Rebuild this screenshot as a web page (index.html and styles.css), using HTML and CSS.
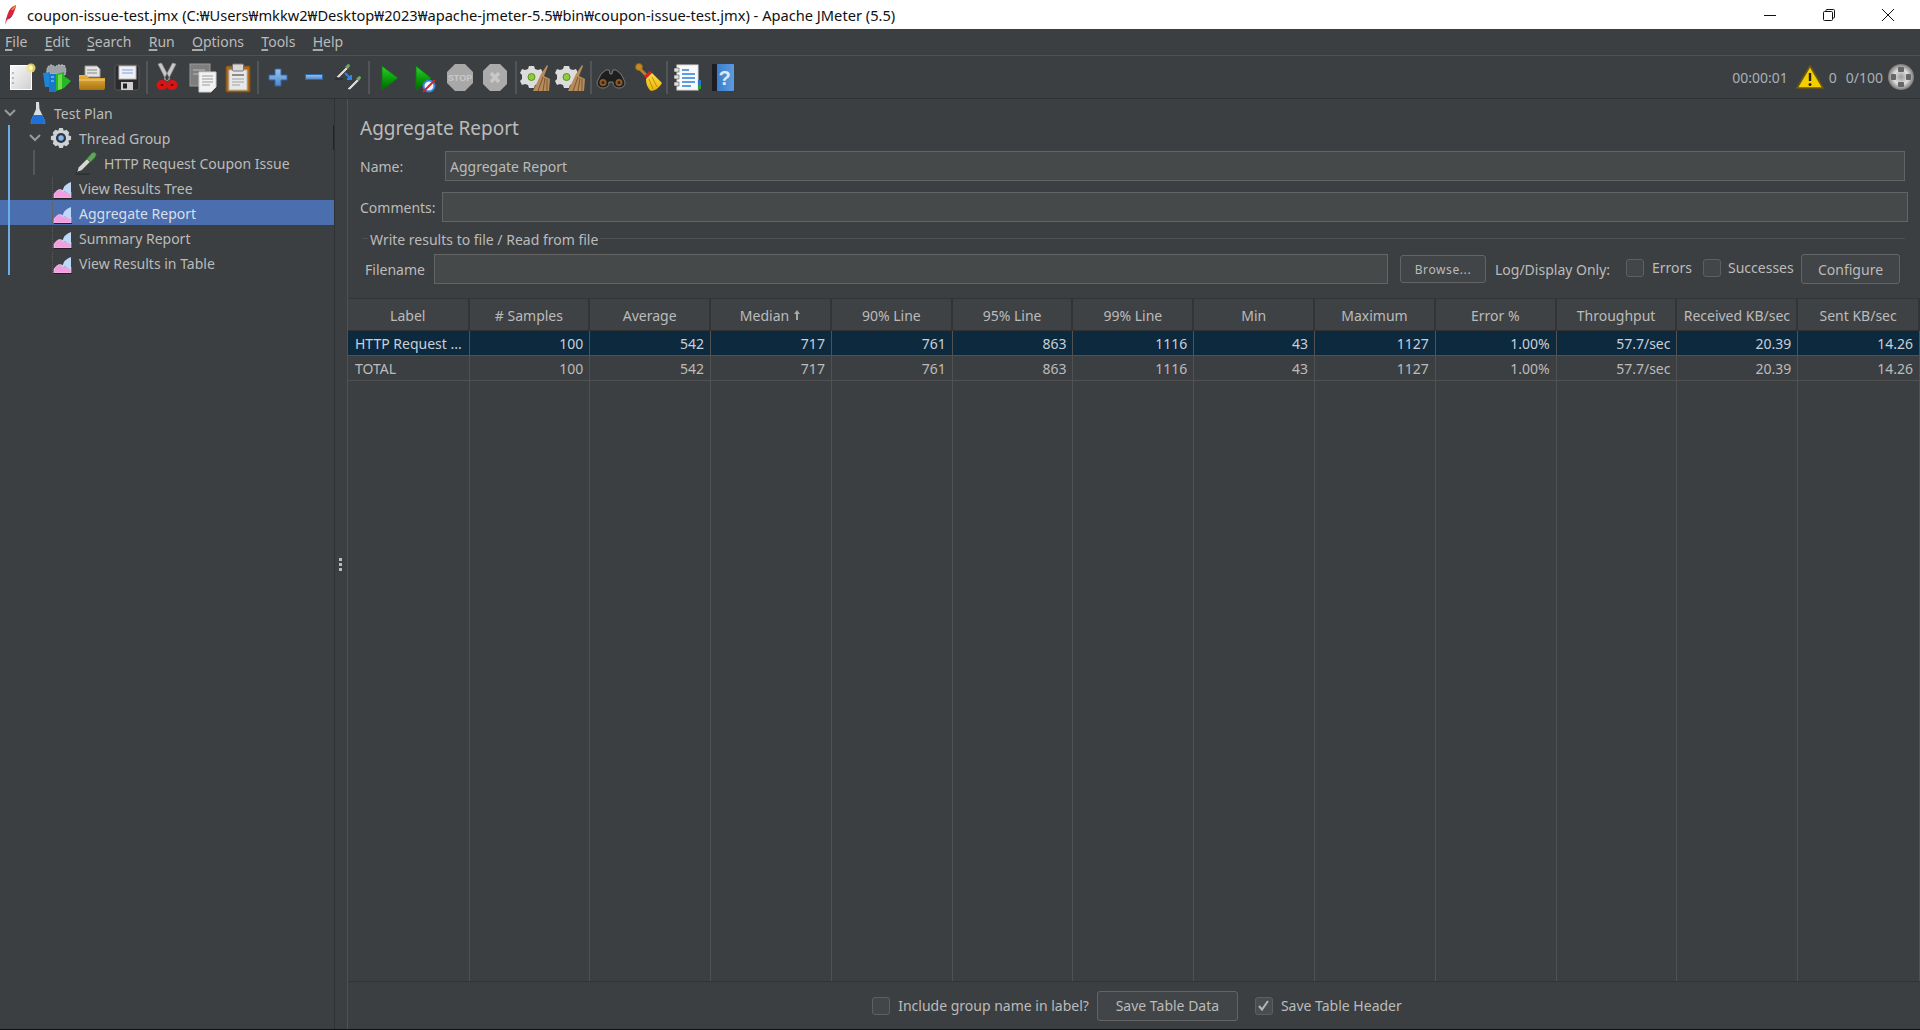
FILE: index.html
```html
<!DOCTYPE html>
<html lang="en">
<head>
<meta charset="utf-8">
<title>coupon-issue-test.jmx - Apache JMeter (5.5)</title>
<link rel="stylesheet" href="styles.css">
</head>
<body>
<svg class="defs" width="0" height="0" aria-hidden="true">
  <defs>
    <linearGradient id="gDoc" x1="0" y1="0" x2="1" y2="1"><stop offset="0" stop-color="#fafafa"/><stop offset="1" stop-color="#cfcfcf"/></linearGradient>
    <linearGradient id="gGreen" x1="0" y1="0" x2="0" y2="1"><stop offset="0" stop-color="#2ed22e"/><stop offset=".55" stop-color="#0a9a0a"/><stop offset="1" stop-color="#056005"/></linearGradient>
    <linearGradient id="gFolder" x1="0" y1="0" x2="0" y2="1"><stop offset="0" stop-color="#eeb440"/><stop offset="1" stop-color="#a87410"/></linearGradient>
    <linearGradient id="gBlue" x1="0" y1="0" x2="0" y2="1"><stop offset="0" stop-color="#9cc4ee"/><stop offset="1" stop-color="#4c86c8"/></linearGradient>
    <linearGradient id="gBook" x1="0" y1="0" x2="1" y2="0"><stop offset="0" stop-color="#2f74c4"/><stop offset="1" stop-color="#5c9be0"/></linearGradient>
    <linearGradient id="gYellow" x1="0" y1="0" x2="0" y2="1"><stop offset="0" stop-color="#ffe14a"/><stop offset="1" stop-color="#e8b400"/></linearGradient>
    <radialGradient id="gGlobe"><stop offset="0" stop-color="#9a9a9a"/><stop offset=".55" stop-color="#e0e0e0"/><stop offset="1" stop-color="#7a7a7a"/></radialGradient>
    <symbol id="pipette" viewBox="3 2 26 28">
      <path d="M5 27 L7 21 L18 10 L22 14 L11 25 Z" fill="#d6d6d6" stroke="#222" stroke-width="1"/>
      <path d="M17 11 L23 4 Q27 2 28 6 Q28 9 21 15 Z" fill="#5fa65a" stroke="#2f5f2c" stroke-width=".8"/>
      <path d="M4 29 H20" stroke="#222" stroke-width="1.400" opacity=".7"/>
    </symbol>
    <symbol id="graph" viewBox="0 0 22 22">
      <path d="M2 21 V17 Q6 11 10 13 Q13 17 19 15 V21 Z" fill="#f0a0e0" stroke="#f8d0f0" stroke-width=".6"/>
      <path d="M10 15 Q12 7 19 5 V18 Q13 13 10 15 Z" fill="#c0d8f8"/>
      <path d="M2 21.500 H20" stroke="#222" stroke-width="1"/>
      <path d="M.500 0 V22" stroke="#5c5c5c" stroke-width="1" stroke-dasharray="1 1"/>
    </symbol>
    <symbol id="clearGear" viewBox="0 0 32 32">
      <path d="M13 5 h5 l1 3 3 1 3-1 2 4-2 2 v4 l2 2-2 4-3-1-3 1-1 3 h-5 l-1-3-3-1-3 1-2-4 2-2 v-4 l-2-2 2-4 3 1 3-1 Z" fill="#dcdcdc" transform="translate(-4 0)"/>
      <circle cx="11.500" cy="16" r="3.500" fill="#8ecb3e" stroke="#5c8f1e"/>
      <path d="M13 30 L21 13 L27 4 L28 5 L24 15 L30 18 L29 30 Z" fill="#b78c5c"/>
      <path d="M18 30 L23 16 M23 30 L25 17 M27 30 L27 18" stroke="#7a5730" stroke-width="1"/>
    </symbol>
  </defs>
</svg>

<header class="titlebar">
  <svg class="feather" width="14" height="20" viewBox="0 0 14 20"><path d="M12 0 Q6 2 4 8 L2 14 L1 20 L3 15 Q9 12 10 7 Q12 3 12 0 Z" fill="#d8243c"/><path d="M12 0 Q9 2 7 5 L9 5 Q11 3 12 0 Z" fill="#f29a2e"/><path d="M4 12 L8 11 L5 14 Z" fill="#8a2a92"/></svg>
  <span class="title-text">coupon-issue-test.jmx (C:₩Users₩mkkw2₩Desktop₩2023₩apache-jmeter-5.5₩bin₩coupon-issue-test.jmx) - Apache JMeter (5.5)</span>
  <div class="winctl">
    <svg width="14" height="14" viewBox="0 0 14 14"><path d="M1 7.500 H13" stroke="#111" stroke-width="1"/></svg>
    <svg width="14" height="14" viewBox="0 0 14 14"><rect x="1.500" y="3.500" width="9" height="9" rx="1" fill="none" stroke="#111"/><path d="M4 3.500 V2.500 Q4 1.500 5 1.500 H11.500 Q12.500 1.500 12.500 2.500 V9 Q12.500 10 11.500 10 H10.500" fill="none" stroke="#111"/></svg>
    <svg width="14" height="14" viewBox="0 0 14 14"><path d="M1 1 L13 13 M13 1 L1 13" stroke="#111" stroke-width="1"/></svg>
  </div>
</header>

<nav class="menubar">
  <span><u>F</u>ile</span><span><u>E</u>dit</span><span><u>S</u>earch</span><span><u>R</u>un</span><span><u>O</u>ptions</span><span><u>T</u>ools</span><span><u>H</u>elp</span>
</nav>

<div class="toolbar">
  <span class="ti"><svg width="32" height="32" viewBox="0 0 32 32"><rect x="5.500" y="4.500" width="21" height="24" fill="url(#gDoc)" stroke="#fff"/><path d="M7 12h2M7 17h2M7 22h2" stroke="#888"/><circle cx="26" cy="7" r="4.500" fill="#f3e27a" opacity=".85"/><circle cx="26" cy="7" r="2" fill="#fff6b8"/></svg></span>
  <span class="ti"><svg width="32" height="32" viewBox="0 0 32 32"><path d="M7 12 Q6 4 12 4 L15 6 L18 4 L24 4 Q27 8 25 14 Z" fill="#9ba3a8" stroke="#c8cdd0" stroke-dasharray="2 1"/><path d="M3 12 L10 11 L10 26 L5 26 Z" fill="#1f84d6"/><path d="M9 13 H16 V31 H9 Z" fill="#1777c8"/><path d="M11 16h3M11 20h3" stroke="#a8e0ff"/><path d="M16 13 L24 11 L24 15 L31 20 L24 27 L16 30 Z" fill="#26b824"/><path d="M18 14 L22 13 L22 28 L18 29 Z" fill="#6fdc4c"/></svg></span>
  <span class="ti"><svg width="32" height="32" viewBox="0 0 32 32"><path d="M9 16 V5 H21 L24 8 V16 Z" fill="#e4e4e4" stroke="#999"/><path d="M11 9h10M11 12h10" stroke="#888"/><path d="M3 14 H11 L13 17 H29 V27 Q29 29 27 29 H5 Q3 29 3 27 Z" fill="url(#gFolder)"/><path d="M3 19 H29" stroke="#f7d27a"/></svg></span>
  <span class="ti"><svg width="32" height="32" viewBox="0 0 32 32"><rect x="4" y="4" width="24" height="25" rx="2" fill="#2b2b2d" stroke="#555"/><rect x="8" y="5" width="17" height="13" fill="#eef0f6" stroke="#bbb"/><path d="M11 9h11M11 12h11" stroke="#7fa4d6"/><rect x="10" y="21" width="12" height="8" fill="#cfcfcf"/><rect x="12" y="22.500" width="4" height="5" fill="#222"/></svg></span>
  <i class="tsep"></i>
  <span class="ti"><svg width="32" height="32" viewBox="0 0 32 32"><path d="M7 3 L10.500 2 L19 18 L15.500 20 Z M25 3 L21.500 2 L13 18 L16.500 20 Z" fill="#c8c8c8" stroke="#8e8e8e" stroke-width=".6"/><ellipse cx="11" cy="24" rx="3.500" ry="3" fill="#5a1010" stroke="#d81414" stroke-width="4"/><ellipse cx="21" cy="24" rx="3.500" ry="3" fill="#5a1010" stroke="#d81414" stroke-width="4"/></svg></span>
  <span class="ti"><svg width="32" height="32" viewBox="0 0 32 32"><rect x="3" y="3" width="20" height="22" fill="#7e7e7e" stroke="#9a9a9a"/><path d="M6 9h12M6 13h9" stroke="#a8a8a8" stroke-width="1.500"/><path d="M12 11 H29 V26 L24 31 H12 Z" fill="#f2f2f2" stroke="#cfcfcf"/><path d="M15 15h11M15 18h11M15 21h11M15 24h8" stroke="#9a9a9a"/></svg></span>
  <span class="ti"><svg width="32" height="32" viewBox="0 0 32 32"><rect x="4" y="5" width="24" height="26" rx="1" fill="#a76a1e" stroke="#7c4a10"/><rect x="7" y="9" width="18" height="20" fill="#e8e8e8" stroke="#bbb"/><rect x="10.500" y="3" width="11" height="7" rx="1" fill="#d8d8d8" stroke="#777"/><path d="M10 14h12" stroke="#8c8c8c" stroke-width="2"/><path d="M10 18h12M10 21h12M10 24h8" stroke="#a0a0a0"/></svg></span>
  <i class="tsep"></i>
  <span class="ti"><svg width="32" height="32" viewBox="0 0 32 32"><path d="M13 8 H19 V14 H25 V19 H19 V25 H13 V19 H7 V14 H13 Z" fill="url(#gBlue)" stroke="#2e68ac"/></svg></span>
  <span class="ti"><svg width="32" height="32" viewBox="0 0 32 32"><rect x="7.500" y="13.500" width="17" height="5" fill="url(#gBlue)" stroke="#2e68ac"/></svg></span>
  <span class="ti"><svg width="32" height="32" viewBox="0 0 32 32"><path d="M3 16 L13 6 L15 8 L6 17 Z" fill="#d8d8d8" stroke="#222" stroke-width=".6"/><path d="M12 6 L15 3 Q17 3 17 5 L15 8 Z" fill="#6cab60"/><path d="M2 18 H10" stroke="#222"/><path d="M14 28 L24 18 L26 20 L17 29 Z" fill="#d8d8d8" stroke="#222" stroke-width=".6"/><path d="M23 18 L26 15 Q28 15 28 17 L26 20 Z" fill="#6cab60"/><path d="M12 12 L18 18 M18 14 V18 H14" stroke="#2a86e8" stroke-width="2" fill="none"/></svg></span>
  <i class="tsep"></i>
  <span class="ti"><svg width="32" height="32" viewBox="0 0 32 32"><path d="M9 5 L25 17 L9 29 Z" fill="url(#gGreen)" stroke="#0b7a0b" stroke-width=".8"/></svg></span>
  <span class="ti"><svg width="32" height="32" viewBox="0 0 32 32"><path d="M7 5 L22 17 L7 29 Z" fill="url(#gGreen)" stroke="#0b7a0b" stroke-width=".8"/><circle cx="20" cy="25" r="5.500" fill="#eef4fb" stroke="#3a82d8" stroke-width="2"/><path d="M14 31 L26 19" stroke="#d92020" stroke-width="1.800"/></svg></span>
  <span class="ti"><svg width="32" height="32" viewBox="0 0 32 32"><path d="M11 3 H21 L29 11 V22 L21 30 H11 L3 22 V11 Z" fill="#a8a8a8"/><text class="stop-word" x="16" y="20">STOP</text></svg></span>
  <span class="ti"><svg width="32" height="32" viewBox="0 0 32 32"><path d="M11 3 H21 L28 10 V23 L21 30 H11 L4 23 V10 Z" fill="#ababab"/><path d="M12 12 L20 21 M20 12 L12 21" stroke="#c8c8c8" stroke-width="3.400"/></svg></span>
  <i class="tsep"></i>
  <span class="ti"><svg width="32" height="32"><use href="#clearGear"/></svg></span>
  <span class="ti"><svg width="32" height="32"><use href="#clearGear"/></svg></span>
  <i class="tsep"></i>
  <span class="ti"><svg width="32" height="32" viewBox="0 0 32 32"><path d="M6 13 L11 9 H14 L15 13 H17 L18 9 H21 L26 13 L30 21 Q30 27 24 27 Q18 27 18 21 H14 Q14 27 8 27 Q2 27 2 21 Z" fill="#1e1e1e" stroke="#8c8c8c" stroke-width=".8"/><circle cx="8" cy="21.500" r="3.500" fill="#8c5a28"/><circle cx="24" cy="21.500" r="3.500" fill="#8c5a28"/><circle cx="8" cy="21.500" r="1.500" fill="#3a2412"/><circle cx="24" cy="21.500" r="1.500" fill="#3a2412"/></svg></span>
  <span class="ti"><svg width="32" height="32" viewBox="0 0 32 32"><circle cx="8" cy="6" r="3.500" fill="#c48a2a" stroke="#8d5f16"/><path d="M9 8 L16 15" stroke="#b98228" stroke-width="3"/><path d="M13 15 L19 10 L21 12 L16 18 Z" fill="#d42424"/><path d="M15 18 L21 12 Q27 18 31 22 Q27 29 20 30 Q15 26 15 18 Z" fill="url(#gYellow)"/><path d="M18 18 L22 28 M21 16 L26 26" stroke="#b88e08"/></svg></span>
  <i class="tsep"></i>
  <span class="ti"><svg width="32" height="32" viewBox="0 0 32 32"><rect x="6" y="4" width="21" height="25" fill="#fafafa" stroke="#ddd"/><rect x="27" y="19" width="3" height="5" fill="#2f74c4"/><rect x="27" y="24" width="3" height="4" fill="#2ba02b"/><rect x="3" y="7" width="5" height="4" fill="#e0e0e0" stroke="#333" stroke-width=".5"/><rect x="3" y="14" width="5" height="4" fill="#e0e0e0" stroke="#333" stroke-width=".5"/><rect x="3" y="21" width="5" height="4" fill="#e0e0e0" stroke="#333" stroke-width=".5"/><path d="M11 9h7M11 13h13M11 17h13M11 21h13M11 25h9" stroke="#2a7ee0" stroke-width="1.300"/></svg></span>
  <span class="ti"><svg width="32" height="32" viewBox="0 0 32 32"><rect x="6" y="3" width="22" height="27" rx="1" fill="url(#gBook)"/><rect x="6" y="3" width="5" height="27" fill="#1b1d22"/><text class="help-mark" x="18.500" y="24">?</text></svg></span>
  <div class="status">
    <span class="st-time">00:00:01</span>
    <svg width="28" height="26" viewBox="0 0 28 26"><path d="M14 2 L27 24 H1 Z" fill="#f4cf00" stroke="#6a5a10" stroke-width="1.600" stroke-linejoin="round"/><path d="M14 9 V17" stroke="#222" stroke-width="2.400"/><circle cx="14" cy="20.500" r="1.500" fill="#222"/></svg>
    <span class="st-zero">0</span>
    <span class="st-count">0/100</span>
    <svg width="28" height="28" viewBox="0 0 28 28"><circle cx="14" cy="14" r="13" fill="url(#gGlobe)"/><g fill="#666"><rect x="11" y="4" width="6" height="5" rx="1"/><rect x="11" y="19" width="6" height="5" rx="1"/><rect x="4" y="11" width="5" height="6" rx="1"/><rect x="19" y="11" width="5" height="6" rx="1"/></g></svg>
  </div>
</div>

<main class="main">
  <aside class="tree">
    <div class="tree-row lv0">
      <svg class="chev" width="14" height="10" viewBox="0 0 14 10"><path d="M2 2 L7 7 L12 2" fill="none" stroke="#9a9a9a" stroke-width="2"/></svg>
      <svg class="ic" width="16" height="24" viewBox="0 0 16 24"><path d="M6 1 H9 L9.500 8 L15 20 Q16 23 13 23 H3 Q0 23 1 20 L6 8 Z" fill="#d8dde0"/><path d="M3 14 H12.500 L15 20 Q16 23 13 23 H3 Q0 23 1 20 Z" fill="#1f6fd8"/></svg>
      <span>Test Plan</span>
    </div>
    <div class="tree-row lv1">
      <svg class="chev" width="14" height="10" viewBox="0 0 14 10"><path d="M2 2 L7 7 L12 2" fill="none" stroke="#9a9a9a" stroke-width="2"/></svg>
      <svg class="ic" width="22" height="22" viewBox="0 0 24 24"><path d="M10 1 h4 l1 3 3-1 3 3-1 3 3 1 v4 l-3 1 1 3-3 3-3-1-1 3 h-4 l-1-3-3 1-3-3 1-3-3-1 v-4 l3-1-1-3 3-3 3 1 Z" fill="#cfd2d4"/><circle cx="12" cy="12" r="5.500" fill="#23364e"/><circle cx="12" cy="12" r="3" fill="#8db4dc"/></svg>
      <span>Thread Group</span>
    </div>
    <div class="tree-row lv2">
      <svg class="ic" width="24" height="24"><use href="#pipette"/></svg>
      <span>HTTP Request Coupon Issue</span>
    </div>
    <div class="tree-row lv3"><svg class="ic" width="22" height="22"><use href="#graph"/></svg><span>View Results Tree</span></div>
    <div class="tree-row lv3 sel"><svg class="ic" width="22" height="22"><use href="#graph"/></svg><span>Aggregate Report</span></div>
    <div class="tree-row lv3"><svg class="ic" width="22" height="22"><use href="#graph"/></svg><span>Summary Report</span></div>
    <div class="tree-row lv3"><svg class="ic" width="22" height="22"><use href="#graph"/></svg><span>View Results in Table</span></div>
    <i class="guide g-blue"></i>
    <i class="guide g-grey"></i>
    <i class="guide g-edge"></i>
  </aside>
  <div class="splitter"><i></i><i></i><i></i></div>
  <section class="panel">
    <h1 class="panel-title">Aggregate Report</h1>
    <div class="frow name-row"><label>Name:</label><div class="input">Aggregate Report</div></div>
    <div class="frow comm-row"><label>Comments:</label><div class="input"></div></div>
    <div class="legend"><i class="l1"></i><span>Write results to file / Read from file</span><i class="l2"></i></div>
    <div class="frow file-row">
      <label>Filename</label><div class="input"></div>
      <button class="btn browse">Browse...</button>
      <span class="logonly">Log/Display Only:</span>
      <span class="cb"></span><span class="cbl err">Errors</span>
      <span class="cb"></span><span class="cbl suc">Successes</span>
      <button class="btn conf">Configure</button>
    </div>
    <div class="table">
      <div class="thead">
        <div>Label</div><div># Samples</div><div>Average</div><div>Median <svg width="8" height="12" viewBox="0 0 8 12"><path d="M4 1 L7 5 H5 V11 H3 V5 H1 Z" fill="#a8a8a8"/></svg></div><div>90% Line</div><div>95% Line</div><div>99% Line</div><div>Min</div><div>Maximum</div><div>Error %</div><div>Throughput</div><div>Received KB/sec</div><div>Sent KB/sec</div>
      </div>
      <div class="trow picked">
        <div>HTTP Request ...</div><div>100</div><div>542</div><div>717</div><div>761</div><div>863</div><div>1116</div><div>43</div><div>1127</div><div>1.00%</div><div>57.7/sec</div><div>20.39</div><div>14.26</div>
      </div>
      <div class="trow">
        <div>TOTAL</div><div>100</div><div>542</div><div>717</div><div>761</div><div>863</div><div>1116</div><div>43</div><div>1127</div><div>1.00%</div><div>57.7/sec</div><div>20.39</div><div>14.26</div>
      </div>
      <div class="tfill">
        <div></div><div></div><div></div><div></div><div></div><div></div><div></div><div></div><div></div><div></div><div></div><div></div><div></div>
      </div>
    </div>
    <footer class="foot">
      <span class="cb"></span><span class="cbl inc">Include group name in label?</span>
      <button class="btn save">Save Table Data</button>
      <span class="cb on"><svg width="13" height="13" viewBox="0 0 13 13"><path d="M2 7 L5 10.500 L11 2" fill="none" stroke="#b4b4b4" stroke-width="2"/></svg></span><span class="cbl hdr">Save Table Header</span>
    </footer>
  </section>
</main>
</body>
</html>
```
FILE: styles.css
```css
* { box-sizing: border-box; }
html, body { margin: 0; padding: 0; }
body {
  width: 1920px;
  height: 1030px;
  overflow: hidden;
  display: flex;
  flex-direction: column;
  background: #3c3f41;
  color: #bbbbbb;
  font-family: "Noto Sans", "Noto Sans CJK KR", sans-serif;
  font-size: 14px;
  border-bottom: 1px solid #111;
}
.defs { display: block; width: 0; height: 0; }

.titlebar {
  height: 29px;
  background: #fff;
  color: #111;
  display: flex;
  align-items: center;
  padding-left: 4px;
  flex: none;
}
.feather { margin-right: 9px; }
.title-text { font-size: 14.650px; white-space: nowrap; }
.winctl { margin-left: auto; display: flex; gap: 45px; padding-right: 25px; }

.menubar {
  height: 27px;
  flex: none;
  display: flex;
  align-items: center;
  gap: 17.300px;
  padding: 0 0 1px 5px;
  border-bottom: 1px solid #515151;
}
.menubar u { text-decoration-thickness: 2px; text-underline-offset: 2px; text-decoration-color: #aaaaaa; }

.toolbar {
  height: 43px;
  flex: none;
  display: flex;
  align-items: center;
  padding-left: 3.300px;
  border-bottom: 1px solid #2f3133;
}
.ti { width: 35.400px; display: flex; justify-content: center; flex: none; }
.tsep { width: 2px; height: 33px; margin: 0 1.400px; background: #525557; flex: none; }
.stop-word { font: bold 9px "Liberation Sans", sans-serif; fill: #c8c8c8; text-anchor: middle; }
.help-mark { font: bold 20px "Liberation Sans", sans-serif; fill: #dce9f8; text-anchor: middle; }
.status { margin-left: auto; display: flex; align-items: center; padding-right: 5px; color: #a8b0b8; }
.st-time { margin-right: 8px; }
.st-zero { margin: 0 9px 0 5px; }
.st-count { margin-right: 4px; }

.main { flex: 1; display: flex; min-height: 0; }

.tree {
  width: 335px;
  flex: none;
  padding-top: 1px;
  border-right: 1px solid #2f3133;
  position: relative;
}
.tree-row {
  height: 25px;
  display: flex;
  align-items: center;
  white-space: nowrap;
}
.tree-row span { padding-top: 2px; }
.tree-row.sel { background: #4b6eaf; color: #d8dfe8; }
.lv0 .chev { margin-left: 3px; margin-right: 13px; }
.lv0 .ic { margin-right: 8px; }
.lv1 .chev { margin-left: 28px; margin-right: 8px; }
.lv1 .ic { margin-right: 7px; }
.lv2 { padding-left: 74px; }
.lv2 .ic { margin-right: 6px; }
.lv3 { padding-left: 52px; }
.lv3 .ic { margin-right: 5px; }
.guide { position: absolute; display: block; }
.g-blue { left: 8px; top: 26px; width: 2px; height: 150px; background: #6aaee8; }
.g-grey { left: 33px; top: 51px; width: 2px; height: 25px; background: #555759; }
.g-edge { right: 0; top: 26px; width: 1px; height: 25px; background: #0d293e; }

.splitter {
  width: 12px;
  flex: none;
  display: flex;
  flex-direction: column;
  align-items: center;
  justify-content: center;
  gap: 2px;
}
.splitter i { width: 3px; height: 3px; background: #bbbbbb; margin-left: -1px; }

.panel {
  flex: 1;
  min-width: 0;
  display: flex;
  flex-direction: column;
  border-left: 1px solid #515151;
}
.panel-title {
  margin: 17px 0 0 12px;
  height: 24px;
  line-height: 24px;
  font-size: 19px;
  font-weight: 400;
}
.frow { display: flex; align-items: center; height: 30px; flex: none; }
.frow label { flex: none; }
.input {
  flex: 1;
  height: 100%;
  background: #45494a;
  border: 1px solid #646464;
  padding-left: 4px;
  display: flex;
  align-items: center;
}
.name-row { margin-top: 11px; padding: 0 15px 0 12px; }
.name-row label { width: 85px; }
.comm-row { margin-top: 11px; padding: 0 12px 0 12px; }
.comm-row label { width: 82px; }
.legend { height: 24px; margin: 5px 15px 1px 14px; display: flex; align-items: center; flex: none; }
.legend i { height: 1px; background: #515151; display: block; margin-top: -1px; }
.legend .l1 { width: 6px; margin-right: 2px; }
.legend .l2 { flex: 1; margin-left: 2px; }
.file-row { margin-top: 2px; padding: 0 0 0 17px; white-space: nowrap; }
.file-row label { width: 69px; }
.file-row .input { flex: none; width: 954px; }
.btn {
  font: inherit;
  color: inherit;
  background: #414547;
  border: 1px solid #646464;
  border-radius: 3px;
  padding: 0;
  flex: none;
}
.browse { width: 86px; height: 28px; margin-left: 12px; font-size: 12px; letter-spacing: .6px; }
.logonly { margin-left: 9px; width: 131px; flex: none; }
.cb {
  width: 18px;
  height: 18px;
  flex: none;
  border: 1px solid #5e6060;
  border-radius: 3px;
  background: #434648;
  display: inline-flex;
  align-items: center;
  justify-content: center;
}
.file-row .cb { margin-top: -3px; }
.cbl { margin-left: 8px; white-space: nowrap; flex: none; }
.file-row .cbl { margin-top: -3px; }
.err { width: 51px; }
.suc { margin-left: 7px; width: 73px; }
.conf { width: 99px; height: 30px; }

.table { margin: 14px 0 0 0; flex: 1; display: flex; flex-direction: column; min-height: 0; }
.thead, .trow, .tfill { display: grid; grid-template-columns: 121.500px repeat(11, 120.800px) 1fr; flex: none; }
.thead { height: 33px; border-top: 1px solid #323436; border-bottom: 1px solid #2f3133; background: #3f4244; }
.thead > div {
  display: flex;
  align-items: center;
  justify-content: center;
  gap: 4px;
  padding-top: 1px;
  border-right: 2px solid #323436;
  white-space: nowrap;
}
.trow { height: 25px; border-bottom: 1px solid #515151; }
.trow > div {
  text-align: right;
  line-height: 25px;
  padding: 0 6px;
  border-right: 1px solid #515151;
  white-space: nowrap;
}
.trow > div:first-child { text-align: left; padding-left: 7px; }
.picked { background: #0d293e; color: #c8d0d8; }
.tfill { flex: 1; }
.tfill > div { border-right: 1px solid #515151; }
.foot {
  height: 48px;
  flex: none;
  display: flex;
  align-items: center;
  justify-content: center;
  padding-left: 6px;
  border-top: 1px solid #323436;
}
.save { width: 141px; height: 30px; margin: 0 17px 0 8px; }
.cb.on { background: #4a4d4f; }
```
